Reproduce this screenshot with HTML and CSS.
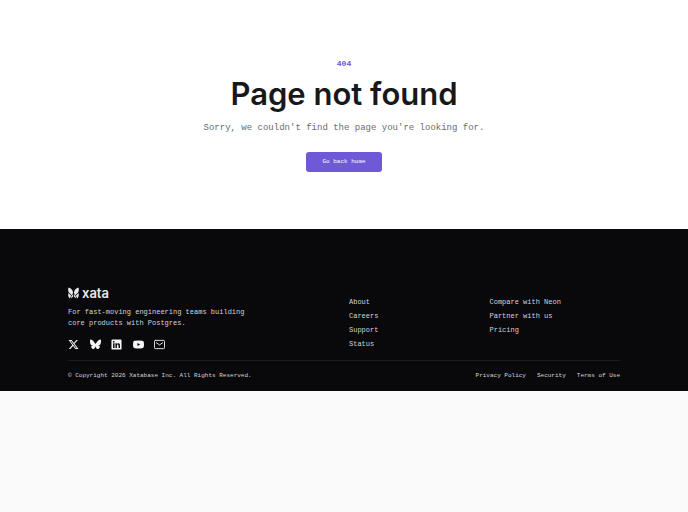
FILE: index.html
```
<!DOCTYPE html>
<html lang="en">
<head>
    <meta charset="utf-8">
    <meta name="viewport" content="width=device-width, initial-scale=1">
    <title>Page not found</title>
    <link rel="stylesheet" href="styles.css">
</head>
<body>
    <main class="not-found">
        <p class="code">404</p>
        <h1>Page not found</h1>
        <p class="message">Sorry, we couldn't find the page you're looking for.</p>
        <a class="home-button" href="/">Go back home</a>
    </main>

    <footer class="footer">
        <div class="container">
            <div class="footer-top">
                <div class="about">
                    <a class="logo" href="/">
                        <svg viewBox="0 0 24 24" fill="currentColor" aria-hidden="true">
                            <path d="M1 0c6 1 10 6 10 12L8 17 2 11C0 8 0 4 1 0z"/>
                            <path d="M23 0c-6 1-10 6-10 12l3 5 6-6c2-3 2-7 1-11z"/>
                            <path d="M1 12l6 6-3 6c-4-3-4-8-3-12z"/>
                            <path d="M23 12l-6 6 3 6c4-3 4-8 3-12z"/>
                            <path d="M11 14v6l-5 4 2-6z"/>
                            <path d="M13 14v6l5 4-2-6z"/>
                        </svg>
                        <span>xata</span>
                    </a>
                    <p class="tagline">For fast-moving engineering teams building<br>core products with Postgres.</p>
                    <div class="social">
                        <a href="#" aria-label="X">
                            <svg viewBox="0 0 24 24" fill="currentColor"><path d="M18.2 2.3h3.4l-7.3 8.3 8.6 11.3h-6.7l-5.2-6.9-6 6.9H1.6l7.8-8.9L1.2 2.3H8l4.7 6.2zm-1.2 17.6h1.9L7 4.2H5z"/></svg>
                        </a>
                        <a href="#" aria-label="Bluesky">
                            <svg viewBox="0 0 24 24" fill="currentColor"><path d="M5.200 2.500C8 4.600 11 8.800 12 11c1-2.200 4-6.400 6.800-8.500C20.800 1 24 0 24 3.600c0 .8-.4 6-.7 6.900-.8 3-3.900 3.700-6.600 3.300 4.700.8 6 3.500 3.300 6.200-5 5.100-7.100-1.300-7.700-2.900L12 16l-.3 1.100c-.6 1.600-2.700 8-7.700 2.900-2.700-2.700-1.400-5.400 3.300-6.200-2.700.4-5.800-.3-6.600-3.300C.4 9.600 0 4.400 0 3.600 0 0 3.200 1 5.200 2.500z"/></svg>
                        </a>
                        <a href="#" aria-label="LinkedIn">
                            <svg viewBox="0 0 24 24" fill="currentColor"><path fill-rule="evenodd" d="M3 1h18a2 2 0 0 1 2 2v18a2 2 0 0 1-2 2H3a2 2 0 0 1-2-2V3a2 2 0 0 1 2-2zm1.500 8.500v10h3.200v-10zM6.100 4.300a1.900 1.900 0 1 0 0 3.800 1.900 1.900 0 0 0 0-3.800zM9.700 9.500v10h3.200v-5.200c0-3 3.500-2.700 3.500 0v5.200h3.200v-6.100c0-4.800-5-4.800-6.700-2.400V9.500z"/></svg>
                        </a>
                        <a href="#" aria-label="YouTube">
                            <svg viewBox="0 0 24 24" fill="currentColor"><path fill-rule="evenodd" d="M4 4q8-1 16 0 3 0 3.500 3 1 5 0 10-.5 3-3.500 3-8 1-16 0-3 0-3.500-3-1-5 0-10Q1 4 4 4zm5.700 4.500v7l6-3.500z"/></svg>
                        </a>
                        <a href="#" aria-label="Email">
                            <svg viewBox="0 0 24 24" fill="none" stroke="currentColor" stroke-width="2" stroke-linecap="round" stroke-linejoin="round"><rect x="1" y="3" width="22" height="18" rx="2"/><path d="M5 8l7 5 7-5"/></svg>
                        </a>
                    </div>
                </div>
                <nav class="links">
                    <a href="#">About</a>
                    <a href="#">Careers</a>
                    <a href="#">Support</a>
                    <a href="#">Status</a>
                </nav>
                <nav class="links">
                    <a href="#">Compare with Neon</a>
                    <a href="#">Partner with us</a>
                    <a href="#">Pricing</a>
                </nav>
            </div>
            <div class="footer-bottom">
                <p>© Copyright 2026 Xatabase Inc. All Rights Reserved.</p>
                <nav class="legal">
                    <a href="#">Privacy Policy</a>
                    <a href="#">Security</a>
                    <a href="#">Terms of Use</a>
                </nav>
            </div>
        </div>
    </footer>
</body>
</html>
```
FILE: styles.css
```
* {
    box-sizing: border-box;
}

body {
    margin: 0;
    background-color: #fafafa;
    color: #18181b;
    font-family: "Liberation Mono", monospace;
    font-size: 7px;
}

p, h1 {
    margin: 0;
}

a {
    color: inherit;
    text-decoration: none;
}

/* 404 message */
.not-found {
    display: flex;
    flex-direction: column;
    align-items: center;
    padding: 58px 20px 57px;
    background-color: #fff;
    text-align: center;
}

.code {
    color: #6d55d1;
    font-size: 8px;
    font-weight: bold;
    line-height: 12px;
}

h1 {
    margin-top: 6px;
    font-family: Inter, sans-serif;
    font-size: 31px;
    font-weight: 600;
    line-height: 36px;
}

.message {
    margin-top: 9px;
    color: #6b6b70;
    font-size: 9px;
    line-height: 14px;
}

.home-button {
    margin-top: 17px;
    padding: 0 16px;
    border-radius: 3px;
    background-color: #7059d6;
    color: #fff;
    font-size: 6px;
    line-height: 20px;
}

/* footer */
.footer {
    padding: 57px 20px 8px;
    background-color: #09090b;
    color: #d4d4d8;
}

.container {
    max-width: 552px;
    margin: 0 auto;
}

.footer-top {
    display: grid;
    grid-template-columns: repeat(4, 1fr);
    gap: 10px;
    padding-bottom: 10px;
    border-bottom: 1px solid #1c1c20;
}

.about {
    grid-column: span 2;
}

.logo {
    display: flex;
    align-items: center;
    gap: 3px;
    height: 14px;
    color: #e8e8ea;
    font-family: Inter, sans-serif;
    font-size: 13px;
    font-weight: 600;
    line-height: 12px;
}

.logo svg {
    width: 11px;
    height: 12px;
}

.tagline {
    margin-top: 7px;
    line-height: 11px;
}

.social {
    display: flex;
    justify-content: space-between;
    width: 97px;
    margin-top: 10px;
    color: #f4f4f5;
}

.social svg {
    display: block;
    width: 11px;
    height: 11px;
}

.links {
    display: flex;
    flex-direction: column;
    gap: 4px;
    padding-top: 11px;
    line-height: 10px;
}

.footer-bottom {
    display: flex;
    justify-content: space-between;
    padding: 10px 0 2px;
    font-size: 6px;
    line-height: 10px;
}

.legal {
    display: flex;
    gap: 11px;
}
```
